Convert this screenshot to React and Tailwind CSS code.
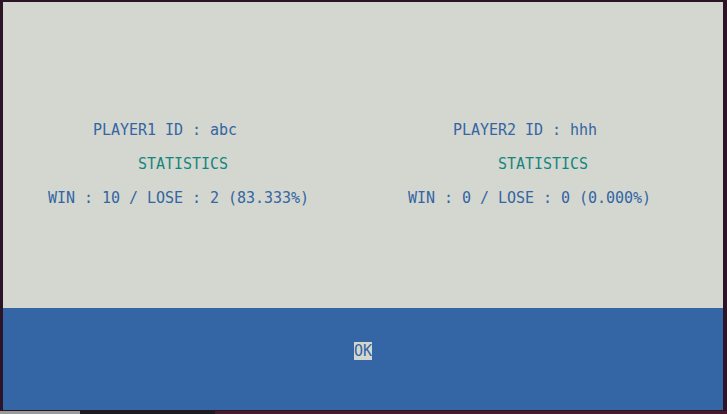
import React from 'react';

const mono = { fontFamily: '"DejaVu Sans Mono", "Liberation Mono", monospace' };

const Row = ({ children, className = '' }) => (
  <div className={`h-[17px] leading-[17px] whitespace-pre ${className}`}>{children}</div>
);

const PlayerStats = ({ label, id, win, lose, rate }) => (
  <div className="flex flex-col w-[360px] shrink-0">
    <Row>{'     '}<span className="text-[#3465a4]">{label} ID : {id}</span></Row>
    <Row />
    <Row>{'          '}<span className="text-[#13877f]">STATISTICS</span></Row>
    <Row />
    <Row>
      <span className="text-[#3465a4]">WIN : {win} / LOSE : {lose} ({rate})</span>
    </Row>
  </div>
);

export default function App() {
  return (
    <div className="w-[727px] h-[414px] bg-[#2c1427] flex flex-col overflow-hidden" style={mono}>
      <div className="ml-[3px] mt-[2px] w-[720px] h-[408px] flex flex-col text-[15px] tracking-[-0.03px]">
        <div className="h-[306px] bg-[#d3d7cf] pt-[120px] pl-[45px] flex overflow-hidden">
          <PlayerStats label="PLAYER1" id="abc" win="10" lose="2" rate="83.333%" />
          <PlayerStats label="PLAYER2" id="hhh" win="0" lose="0" rate="0.000%" />
        </div>
        <div className="h-[102px] bg-[#3465a4] pt-[35px] flex justify-center">
          <Row>
            <span className="bg-[#d3d7cf] text-[#3465a4]">OK</span>
          </Row>
        </div>
      </div>
      <div className="h-[1px]" />
      <div className="flex h-[3px]">
        <div className="w-[80px] bg-[#9a9a96]" />
        <div className="w-[135px] bg-[#1c1a1c]" />
        <div className="flex-1 bg-[#4a1a2c]" />
      </div>
    </div>
  );
}
